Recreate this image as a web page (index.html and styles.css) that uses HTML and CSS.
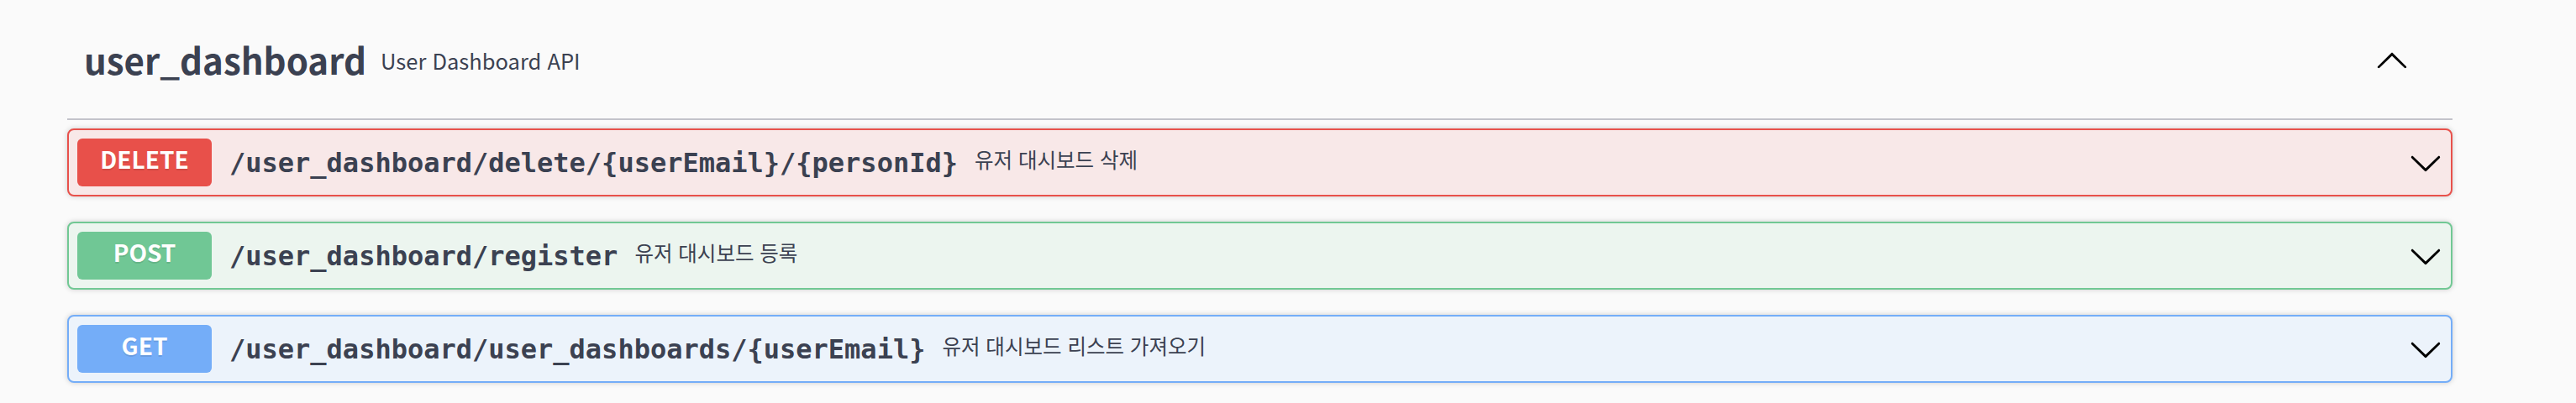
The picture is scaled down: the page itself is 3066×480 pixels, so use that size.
FILE: index.html
```html
<!DOCTYPE html>
<html lang="ko">
<head>
<meta charset="utf-8">
<title>user_dashboard</title>
<link rel="stylesheet" href="styles.css">
</head>
<body>
<div class="section">
  <h3 class="tag">
    <span class="tag-name">user_dashboard</span>
    <small class="tag-desc">User Dashboard API</small>
    <svg class="arrow" viewBox="0 0 20 20" width="40" height="40"><path d="M 17.418 14.908 C 17.69 15.176 18.127 15.176 18.397 14.908 C 18.667 14.64 18.668 14.207 18.397 13.939 L 10.489 6.109 C 10.219 5.841 9.782 5.841 9.51 6.109 L 1.602 13.939 C 1.332 14.207 1.332 14.64 1.602 14.908 C 1.873 15.176 2.311 15.176 2.581 14.908 L 10 7.767 L 17.418 14.908 Z"/></svg>
  </h3>

  <div class="opblock op-delete">
    <div class="summary">
      <span class="method">DELETE</span>
      <span class="path">/user_dashboard/delete/{userEmail}/{personId}</span>
      <span class="desc">유저 대시보드 삭제</span>
      <svg class="arrow" viewBox="0 0 20 20" width="40" height="40"><path d="M17.418 6.109c.272-.268.709-.268.979 0s.271.701 0 .969l-7.908 7.83c-.27.268-.707.268-.979 0l-7.908-7.83c-.27-.268-.27-.701 0-.969.271-.268.709-.268.979 0L10 13.25l7.418-7.141z"/></svg>
    </div>
  </div>

  <div class="opblock op-post">
    <div class="summary">
      <span class="method">POST</span>
      <span class="path">/user_dashboard/register</span>
      <span class="desc">유저 대시보드 등록</span>
      <svg class="arrow" viewBox="0 0 20 20" width="40" height="40"><path d="M17.418 6.109c.272-.268.709-.268.979 0s.271.701 0 .969l-7.908 7.83c-.27.268-.707.268-.979 0l-7.908-7.83c-.27-.268-.27-.701 0-.969.271-.268.709-.268.979 0L10 13.25l7.418-7.141z"/></svg>
    </div>
  </div>

  <div class="opblock op-get">
    <div class="summary">
      <span class="method">GET</span>
      <span class="path">/user_dashboard/user_dashboards/{userEmail}</span>
      <span class="desc">유저 대시보드 리스트 가져오기</span>
      <svg class="arrow" viewBox="0 0 20 20" width="40" height="40"><path d="M17.418 6.109c.272-.268.709-.268.979 0s.271.701 0 .969l-7.908 7.83c-.27.268-.707.268-.979 0l-7.908-7.83c-.27-.268-.27-.701 0-.969.271-.268.709-.268.979 0L10 13.25l7.418-7.141z"/></svg>
    </div>
  </div>
</div>
</body>
</html>
```
FILE: styles.css
```css
html, body {
  margin: 0;
  padding: 0;
  background: #fafafa;
}

body {
  font-family: "Noto Sans CJK KR", "Noto Sans", sans-serif;
  color: #3b4151;
}

.section {
  width: 2839px;
  margin-left: 80px;
}

.tag {
  display: flex;
  align-items: center;
  margin: 0 0 10px;
  padding: 20px 40px 20px 20px;
  min-height: 101px;
  border-bottom: 2px solid #c3c3ca;
  font-weight: 700;
}

.tag-name {
  font-size: 42px;
  font-weight: 700;
  color: #3b4151;
}

.tag-desc {
  flex: 1;
  font-size: 25.5px;
  font-weight: 400;
  padding: 2px 20px 0 17px;
  color: #3b4151;
}

.arrow {
  flex-shrink: 0;
  fill: #000;
}

.tag .arrow {
  margin-right: 12px;
}

.opblock {
  border: 2px solid;
  border-radius: 8px;
  margin-bottom: 30px;
  box-shadow: 0 0 6px rgba(0, 0, 0, 0.19);
}

.summary {
  display: flex;
  align-items: center;
  padding: 10px;
}

.method {
  box-sizing: border-box;
  width: 160px;
  height: 57px;
  padding-bottom: 9px;
  border-radius: 6px;
  display: flex;
  align-items: center;
  justify-content: center;
  color: #fff;
  font-size: 28px;
  font-weight: 700;
  text-shadow: 0 2px 0 rgba(0, 0, 0, 0.1);
}

.path {
  padding: 0 20px 0 21px;
  font-family: "DejaVu Sans Mono", "Liberation Mono", monospace;
  font-size: 32px;
  font-weight: 700;
  color: #3b4151;
  white-space: nowrap;
}

.desc {
  flex: 1;
  font-size: 24.5px;
  color: #3b4151;
  padding-bottom: 9px;
}

.op-delete {
  border-color: #e8514b;
  background: #f8e8e8;
}
.op-delete .method { background: #e8504a; }

.op-post {
  border-color: #71c894;
  background: #ecf5ef;
}
.op-post .method { background: #70c795; }

.op-get {
  border-color: #74adf8;
  background: #ecf3fb;
}
.op-get .method { background: #74adf8; }
```
